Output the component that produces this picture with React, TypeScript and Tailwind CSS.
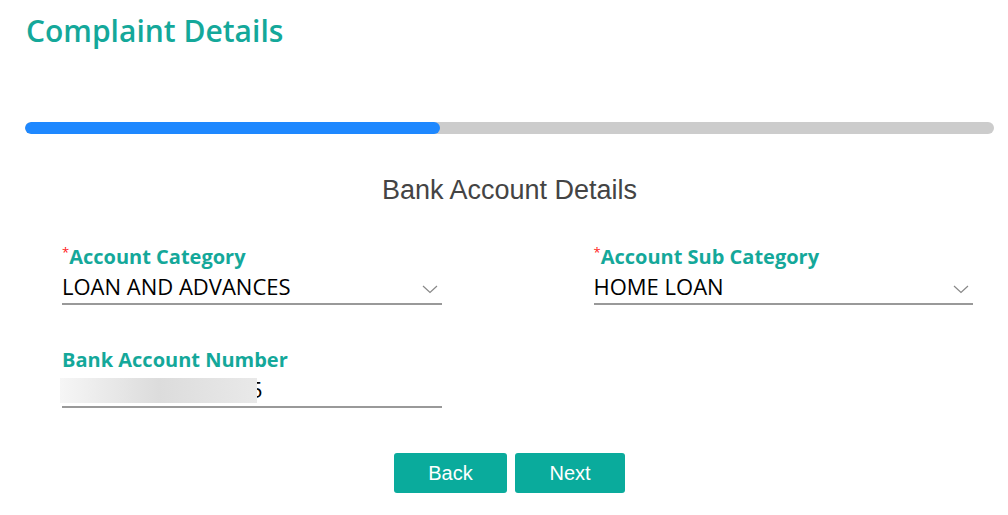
import React from "react";

const Chevron = () => (
  <svg width="16" height="9" viewBox="0 0 16 9" className="absolute right-[4px] top-[15px]">
    <path d="M1 1 L8 7.5 L15 1" fill="none" stroke="#888" strokeWidth="1.2" />
  </svg>
);

const SelectField = ({ label, value }: { label: string; value: string }) => (
  <div className="flex flex-col">
    <div className="flex items-start h-[28px] leading-[30px]">
      <span className="text-[#ff1a1a] text-[13px] leading-[16px] mt-[2px]">*</span>
      <span className="text-[#14a89a] text-[20px] font-bold">{label}</span>
    </div>
    <div className="relative h-[35px] pt-[1px] border-b-2 border-[#999]">
      <span className="block text-black text-[22px] leading-[30px]">{value}</span>
      <Chevron />
    </div>
  </div>
);

export default function App() {
  return (
    <div className="w-[1008px] h-[515px] bg-white font-['Open_Sans',sans-serif] relative overflow-hidden">
      <div className="pl-[25px] pr-[14px]">
        <h1 className="text-[30px] font-semibold text-[#14a89a] leading-[40px] pt-[11px] pl-[1px]">
          Complaint Details
        </h1>
        <div className="mt-[71px] h-[12px] w-full rounded-full bg-[#cccccc] overflow-hidden">
          <div className="h-full w-[415px] rounded-full bg-[#1e88ff]" />
        </div>
        <div className="mt-[40px] text-center text-[27px] text-[#444] font-['Liberation_Sans',Arial,sans-serif] leading-[32px]">
          Bank Account Details
        </div>
        <div className="pl-[37px] pr-[21px] mt-[36px] grid grid-cols-2 gap-x-[152px]">
          <SelectField label="Account Category" value="LOAN AND ADVANCES" />
          <SelectField label="Account Sub Category" value="HOME LOAN" />
          <div className="flex flex-col mt-[40px]">
            <div className="h-[28px] leading-[30px] text-[#14a89a] text-[20px] font-bold">Bank Account Number</div>
            <div className="relative h-[35px] pt-[1px] border-b-2 border-[#999]">
              <span className="block ml-[188px] text-black text-[22px] leading-[30px]">5</span>
              <div className="absolute left-[-2px] top-[5px] w-[197px] h-[25px] bg-gradient-to-r from-[#f6f6f6] via-[#dcdcdc] to-[#e9e9e9]" />
            </div>
          </div>
        </div>
        <div className="mt-[45px] flex justify-center gap-[8px]">
          <button className="w-[113px] h-[40px] rounded-[3px] bg-[#0aab9c] text-white text-[20px] font-['Liberation_Sans',Arial,sans-serif]">
            Back
          </button>
          <button className="w-[110px] h-[40px] rounded-[3px] bg-[#0aab9c] text-white text-[20px] font-['Liberation_Sans',Arial,sans-serif]">
            Next
          </button>
        </div>
      </div>
    </div>
  );
}
